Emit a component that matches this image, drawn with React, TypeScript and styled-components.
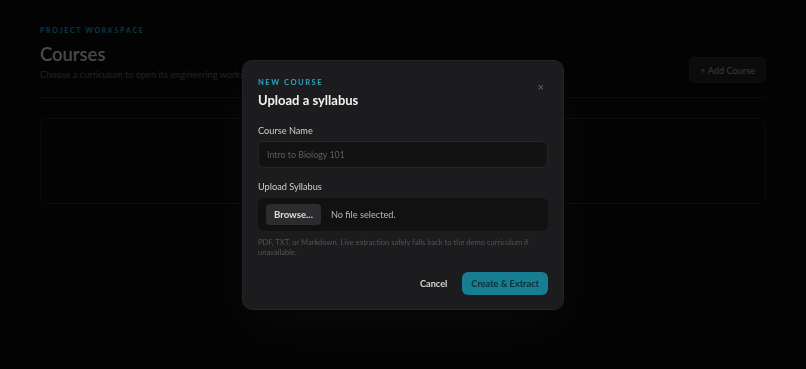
import styled, { createGlobalStyle } from 'styled-components'

const GlobalStyle = createGlobalStyle`
    html, body {
        margin: 0;
        padding: 0;
        background: #030303;
        font-family: Lato, "Noto Sans", sans-serif;
    }
    * { box-sizing: border-box; }
`

const Page = styled.main`
    min-height: 369px;
    padding: 26px 40px 0;
    background: #030303;
`

const PageHeader = styled.header`
    display: flex;
    justify-content: space-between;
    align-items: flex-start;
    padding-bottom: 14px;
    border-bottom: 1px solid #0b0b0b;
`

const Eyebrow = styled.div<{ $bright?: boolean }>`
    font-size: ${p => (p.$bright ? '7.6px' : '7px')};
    font-weight: 700;
    letter-spacing: ${p => (p.$bright ? '1.5px' : '1.75px')};
    color: ${p => (p.$bright ? '#2ba6bf' : '#0d3a44')};
    text-transform: uppercase;
`

const PageTitle = styled.h1`
    margin: 8px 0 0;
    font-size: 18.4px;
    font-weight: 600;
    color: #4a4a4a;
    line-height: 24px;
`

const PageSub = styled.p`
    margin: 3px 0 0;
    font-size: 9.2px;
    color: #232323;
`

const AddButton = styled.button`
    margin-top: 31px;
    height: 26px;
    padding: 0 10px;
    border: 1px solid #0e0e0e;
    border-radius: 5px;
    background: #0b0b0b;
    color: #3d3d3d;
    font: inherit;
    font-size: 9.2px;
`

const CourseCard = styled.section`
    margin-top: 20px;
    height: 86px;
    border: 1px solid #0c0c0c;
    border-radius: 8px;
`

const Overlay = styled.div`
    position: fixed;
    inset: 0;
    display: flex;
    align-items: center;
    justify-content: center;
`

const Modal = styled.div`
    position: relative;
    width: 322px;
    padding: 16px 15px 14px;
    background: #1c1c1e;
    border: 1px solid #242426;
    border-radius: 10px;
    box-shadow: 0 20px 60px rgba(255, 255, 255, 0.03);
`

const Close = styled.button`
    position: absolute;
    top: 21px;
    right: 19px;
    border: 0;
    background: none;
    color: #6a6a6a;
    font-size: 11px;
    line-height: 1;
    padding: 0;
`

const Title = styled.h2`
    margin: 5px 0 0;
    font-size: 13px;
    font-weight: 700;
    color: #f2f2f2;
`

const Field = styled.div<{ $first?: boolean }>`
    margin-top: ${p => (p.$first ? '17px' : '13px')};
    display: flex;
    flex-direction: column;
    gap: 5px;
`

const Label = styled.label`
    font-size: 9.2px;
    color: #cfcfcf;
`

const Input = styled.input`
    height: 27px;
    padding: 0 8px;
    background: #121213;
    border: 1px solid #262628;
    border-radius: 6px;
    color: #ddd;
    font: inherit;
    font-size: 8.9px;
    &::placeholder { color: #5d5d5d; }
`

const FileBox = styled.div`
    margin-top: 1px;
    height: 33px;
    display: flex;
    align-items: center;
    gap: 10px;
    padding: 0 8px;
    background: #111112;
    border-radius: 6px;
`

const Browse = styled.span`
    height: 21px;
    padding: 0 8px;
    display: flex;
    align-items: center;
    background: #2c2c2e;
    border-radius: 4px;
    color: #dedede;
    font-size: 9.6px;
    font-weight: 700;
`

const FileName = styled.span`
    font-size: 9.2px;
    color: #b9b9b9;
`

const Help = styled.p`
    margin: 2px 0 0;
    font-size: 7.55px;
    line-height: 10px;
    color: #555;
`

const Actions = styled.div`
    margin-top: 14px;
    display: flex;
    justify-content: flex-end;
    align-items: center;
    gap: 6px;
`

const Button = styled.button<{ $primary?: boolean }>`
    height: 23px;
    padding: 0 9px;
    border: 0;
    border-radius: 6px;
    font: inherit;
    font-size: 9.2px;
    font-weight: 700;
    background: ${p => (p.$primary ? '#177d90' : 'transparent')};
    color: ${p => (p.$primary ? '#0c2e38' : '#d4d4d4')};
`

export default function App() {
    return (
        <>
            <GlobalStyle />
            <Page>
                <PageHeader>
                    <div>
                        <Eyebrow>Project Workspace</Eyebrow>
                        <PageTitle>Courses</PageTitle>
                        <PageSub>Choose a curriculum to open its engineering workspace.</PageSub>
                    </div>
                    <AddButton>+ Add Course</AddButton>
                </PageHeader>
                <CourseCard />
            </Page>
            <Overlay>
                <Modal>
                    <Close>×</Close>
                    <Eyebrow $bright>New Course</Eyebrow>
                    <Title>Upload a syllabus</Title>
                    <Field $first>
                        <Label>Course Name</Label>
                        <Input placeholder="Intro to Biology 101" />
                    </Field>
                    <Field>
                        <Label>Upload Syllabus</Label>
                        <FileBox>
                            <Browse>Browse...</Browse>
                            <FileName>No file selected.</FileName>
                        </FileBox>
                        <Help>
                            PDF, TXT, or Markdown. Live extraction safely falls back to the demo curriculum if unavailable.
                        </Help>
                    </Field>
                    <Actions>
                        <Button>Cancel</Button>
                        <Button $primary>Create &amp; Extract</Button>
                    </Actions>
                </Modal>
            </Overlay>
        </>
    )
}
